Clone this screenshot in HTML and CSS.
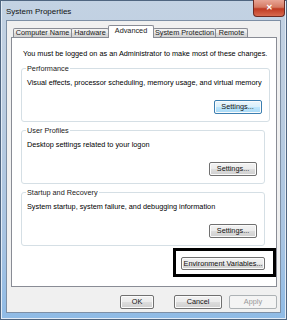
FILE: index.html
```html
<!DOCTYPE html>
<html lang="en">
<head>
    <meta charset="UTF-8">
    <title>System Properties</title>
    <link rel="stylesheet" href="styles.css">
</head>
<body>
    <div class="window">
        <div class="titlebar">
            <span class="title">System Properties</span>
            <span class="close">&#x2715;</span>
        </div>
        <div class="client">
            <div class="tabs">
                <span class="tab t-name">Computer Name</span>
                <span class="tab t-hw">Hardware</span>
                <span class="tab active">Advanced</span>
                <span class="tab t-prot">System Protection</span>
                <span class="tab t-rem">Remote</span>
            </div>
            <div class="panel">
                <p class="intro">You must be logged on as an Administrator to make most of these changes.</p>
                <fieldset class="group">
                    <legend>Performance</legend>
                    <p class="desc">Visual effects, processor scheduling, memory usage, and virtual memory</p>
                    <div class="row"><button class="btn focus">Settings...</button></div>
                </fieldset>
                <fieldset class="group">
                    <legend>User Profiles</legend>
                    <p class="desc">Desktop settings related to your logon</p>
                    <div class="row"><button class="btn">Settings...</button></div>
                </fieldset>
                <fieldset class="group last">
                    <legend>Startup and Recovery</legend>
                    <p class="desc">System startup, system failure, and debugging information</p>
                    <div class="row"><button class="btn">Settings...</button></div>
                </fieldset>
                <div class="env-row">
                    <div class="highlight">
                        <button class="btn env">Environment Variables...</button>
                    </div>
                </div>
            </div>
            <div class="footer">
                <button class="btn ok">OK</button>
                <button class="btn cancel">Cancel</button>
                <button class="btn apply disabled">Apply</button>
            </div>
        </div>
    </div>
</body>
</html>
```

FILE: styles.css
```css
body {
    margin: 0;
    width: 287px;
    height: 320px;
    overflow: hidden;
    font-family: "Liberation Sans", Arial, sans-serif;
    font-size: 7.3px;
    color: #000;
}
.window {
    box-sizing: border-box;
    width: 287px;
    height: 320px;
    display: flex;
    flex-direction: column;
    padding: 0 5px 6px 5px;
    border: 1px solid #4f6580;
    background: linear-gradient(to bottom, #c3d2e3 0%, #bccde0 30%, #a8c4e2 75%, #8fbbe6 100%);
    box-shadow: inset 1px 0 0 #e3ecf6, inset -1px 0 0 #e3ecf6, inset 0 -1px 0 #e3ecf6;
}
.titlebar {
    height: 19px;
    display: flex;
    align-items: flex-start;
}
.title {
    margin-top: 6px;
    line-height: 10px;
    font-size: 8px;
    color: #111;
}
.close {
    box-sizing: border-box;
    margin-left: auto;
    margin-right: -4px;
    margin-top: -1px;
    width: 32px;
    height: 17px;
    border: 1px solid #6d2a22;
    border-top: none;
    border-radius: 0 0 4px 4px;
    background: linear-gradient(to bottom, #e8a595 0%, #d57a63 45%, #bf3a22 55%, #d86a4f 100%);
    color: #fff;
    font-size: 8px;
    font-weight: bold;
    text-align: center;
    line-height: 15px;
}
.client {
    flex: 1;
    display: flex;
    flex-direction: column;
    background: #f0f0f0;
    border: 1px solid #7d8fa5;
    padding: 0 3px 0 4px;
}
.tabs {
    display: flex;
    align-items: flex-end;
    height: 12px;
    margin-top: 4px;
    margin-left: 2px;
}
.tab {
    box-sizing: border-box;
    height: 9px;
    line-height: 8px;
    margin-right: -1px;
    border: 1px solid #898c95;
    border-bottom: none;
    border-radius: 2px 2px 0 0;
    background: linear-gradient(to bottom, #f3f3f3 0%, #ebebeb 50%, #dddddd 51%, #d3d3d3 100%);
    color: #222;
    text-align: center;
    white-space: nowrap;
}
.t-name {
    width: 59px;
}
.t-hw {
    width: 38px;
}
.t-prot {
    width: 63px;
}
.t-rem {
    width: 33px;
}
.tab.active {
    position: relative;
    z-index: 1;
    width: 46px;
    height: 13px;
    margin-bottom: -1px;
    background: #fff;
    line-height: 10px;
}
.panel {
    box-sizing: border-box;
    height: 250px;
    background: #fff;
    border: 1px solid #898c95;
    padding: 0 11px 0 9px;
}
.intro {
    margin: 11px 0 6px 2px;
    line-height: 9px;
    white-space: nowrap;
}
.group {
    margin: 0 0 4px 0;
    padding: 0 7px 7px 5px;
    border: 1px solid #d5dfe5;
    border-radius: 3px;
}
.group.last {
    margin-bottom: 0;
}
.group legend {
    padding: 0 1px;
    margin-left: -1px;
    line-height: 9px;
    color: #222;
}
.desc {
    margin: 5px 0 0 0;
    line-height: 9px;
    white-space: nowrap;
}
.row {
    display: flex;
    justify-content: flex-end;
    margin-top: 13px;
}
.btn {
    box-sizing: border-box;
    width: 48px;
    height: 14px;
    padding: 0;
    border: 1px solid #707070;
    border-radius: 2px;
    background: linear-gradient(to bottom, #f2f2f2 0%, #ebebeb 50%, #dddddd 51%, #cfcfcf 100%);
    box-shadow: inset 0 0 0 1px #fbfbfb;
    font-family: "Liberation Sans", Arial, sans-serif;
    font-size: 7.3px;
    line-height: 10px;
    color: #111;
}
.btn.focus {
    border-color: #3c7fb1;
    background: linear-gradient(to bottom, #eaf6fd 0%, #d9f0fc 50%, #bee6fd 51%, #a7d9f5 100%);
}
.env-row {
    display: flex;
    justify-content: flex-end;
    margin: 2px -11px 0 0;
}
.highlight {
    padding: 6px 8px 4px 5px;
    border: 3px solid #000;
}
.btn.env {
    width: 84px;
    height: 13px;
}
.footer {
    display: flex;
    justify-content: flex-end;
    margin-top: 8px;
}
.btn.ok {
    width: 34px;
    margin-right: 20px;
}
.btn.cancel {
    margin-right: 7px;
}
.btn.disabled {
    border-color: #adb2b5;
    background: #f4f4f4;
    box-shadow: none;
    color: #9a9a9a;
}
```
